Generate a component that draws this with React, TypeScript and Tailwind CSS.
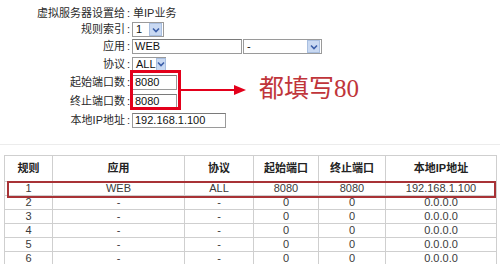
import React from "react";

const font = { fontFamily: '"Liberation Sans", "Noto Sans CJK SC", sans-serif' };

const Chevron: React.FC = () => (
  <span className="flex h-[13px] w-[13px] items-center justify-center bg-[#c9d9f2] border border-[#a9bfe0]">
    <svg width="8" height="6" viewBox="0 0 8 6">
      <path d="M1 1.5 L4 4.5 L7 1.5" fill="none" stroke="#3b5ea8" strokeWidth="1.6" />
    </svg>
  </span>
);

const Select: React.FC<{ value: string; w: string }> = ({ value, w }) => (
  <div className={`flex h-[15px] items-center justify-between border border-[#9a9a9a] bg-white pl-[3px] pr-[1px] ${w}`}>
    <span className="text-[11px] leading-none text-[#111]">{value}</span>
    <Chevron />
  </div>
);

const Input: React.FC<{ value: string; w: string }> = ({ value, w }) => (
  <div className={`flex h-[15px] items-center border border-[#9a9a9a] border-t-[#7a7a7a] bg-white pl-[2px] ${w}`}>
    <span className="text-[11px] leading-none text-[#111]">{value}</span>
  </div>
);

const Row: React.FC<{ label: string; h: string; children: React.ReactNode }> = ({ label, h, children }) => (
  <div className={`flex items-center ${h}`}>
    <span className="w-[125px] text-right text-[11px] leading-none text-[#2a2a2a]">{label}</span>
    <span className="w-[7px] pl-[2px] text-[11px] leading-none text-[#2a2a2a]">:</span>
    {children}
  </div>
);

const rows = [
  ["2", "-", "-", "0", "0", "0.0.0.0"],
  ["3", "-", "-", "0", "0", "0.0.0.0"],
  ["4", "-", "-", "0", "0", "0.0.0.0"],
  ["5", "-", "-", "0", "0", "0.0.0.0"],
  ["6", "-", "-", "0", "0", "0.0.0.0"],
];

const cols = ["w-[48px]", "w-[132px]", "w-[69px]", "w-[65px]", "w-[67px]", "w-[111px]"];

export default function App() {
  return (
    <div className="h-[264px] w-[500px] overflow-hidden bg-white text-[#333]" style={font}>
      <div className="relative pt-[5px]">
        <Row label="虚拟服务器设置给" h="h-[16px]">
          <span className="pl-[1px] text-[11px] leading-none text-[#2a2a2a]">单IP业务</span>
        </Row>
        <Row label="规则索引" h="h-[17px]">
          <Select value="1" w="w-[32px]" />
        </Row>
        <Row label="应用" h="h-[17px]">
          <Input value="WEB" w="w-[110px]" />
          <div className="ml-[1px]">
            <Select value="-" w="w-[79px]" />
          </div>
        </Row>
        <Row label="协议" h="h-[18px]">
          <Select value="ALL" w="w-[34px]" />
        </Row>
        <Row label="起始端口数" h="h-[19px]">
          <Input value="8080" w="w-[45px]" />
        </Row>
        <Row label="终止端口数" h="h-[19px]">
          <Input value="8080" w="w-[45px]" />
        </Row>
        <Row label="本地IP地址" h="h-[19px]">
          <Input value="192.168.1.100" w="w-[94px]" />
        </Row>

        {/* annotation */}
        <div className="absolute left-[130px] top-[70px] h-[40px] w-[51px] border-[3px] border-[#e3001b]" />
        <div className="absolute left-[181px] top-[89px] h-[2px] w-[56px] bg-[#e3001b]" />
        <svg className="absolute left-[234px] top-[85px]" width="12" height="10" viewBox="0 0 12 10">
          <path d="M0 0 L12 5 L0 10 Z" fill="#e3001b" />
        </svg>
        <div
          className="absolute left-[259px] top-[76px] text-[25px] leading-none text-[#c0353a]"
          style={{ fontFamily: '"Liberation Serif", "Noto Sans CJK SC", serif' }}
        >
          都填写80
        </div>
      </div>

      <div className="mt-[14px] h-px bg-[#ececec]" />

      <div className="relative ml-[4px] mt-[10px]">
        <table className="w-[492px] table-fixed border-collapse text-center text-[11px] text-[#3a3a3a]">
          <thead>
            <tr className="h-[26px]">
              {["规则", "应用", "协议", "起始端口", "终止端口", "本地IP地址"].map((t, i) => (
                <th key={t} className={`border border-[#cfcfcf] font-bold text-[#222] ${cols[i]}`}>
                  {t}
                </th>
              ))}
            </tr>
          </thead>
          <tbody>
            <tr className="h-[14px]">
              {["1", "WEB", "ALL", "8080", "8080", "192.168.1.100"].map((t, i) => (
                <td key={i} className="border border-[#cfcfcf] py-0 leading-[13px]">
                  {t}
                </td>
              ))}
            </tr>
            {rows.map((r) => (
              <tr key={r[0]} className="h-[14px]">
                {r.map((t, i) => (
                  <td key={i} className="border border-[#cfcfcf] py-0 leading-[13px]">
                    {t}
                  </td>
                ))}
              </tr>
            ))}
          </tbody>
        </table>
        <div className="absolute left-[3px] top-[26px] h-[17px] w-[489px] border-2 border-[#a83236]" />
      </div>
    </div>
  );
}
